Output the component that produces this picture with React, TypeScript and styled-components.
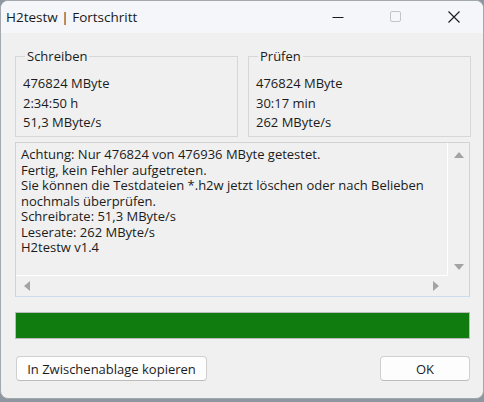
import React from 'react';
import styled, { createGlobalStyle } from 'styled-components';

const GlobalStyle = createGlobalStyle`
  html, body {
    margin: 0;
    padding: 0;
    background: #8e979f;
  }
  body {
    font-family: "Open Sans", "Liberation Sans", sans-serif;
    color: #1b1b1b;
  }
`;

// 窗口外框
const Window = styled.div`
  width: 484px;
  height: 399px;
  box-sizing: border-box;
  border: 1px solid #a3a8ad;
  border-radius: 8px;
  background: #f0f0f0;
  overflow: hidden;
  display: flex;
  flex-direction: column;
`;

const TitleBar = styled.div`
  height: 32px;
  flex: none;
  display: flex;
  align-items: center;
  background: #f4f6f9;
`;

const Title = styled.div`
  flex: 1;
  padding-left: 5px;
  font-size: 13.5px;
  color: #1a1a1a;
  white-space: nowrap;
`;

const CaptionButton = styled.div<{ disabled?: boolean }>`
  width: 58px;
  height: 32px;
  display: flex;
  align-items: center;
  justify-content: center;
  color: ${({ disabled }) => (disabled ? '#c4c4c4' : '#1a1a1a')};
`;

const Body = styled.div`
  flex: 1;
  padding: 15px 13px 0 14px;
  display: flex;
  flex-direction: column;
`;

const Groups = styled.div`
  display: grid;
  grid-template-columns: 223px 223px;
  column-gap: 10px;
`;

const Group = styled.fieldset`
  margin: 0;
  padding: 10px 7px 3px 7px;
  border: 1px solid #d7d7d7;
  min-width: 0;
`;

const Legend = styled.legend`
  padding: 0 2px;
  margin-left: 2px;
  font-size: 13px;
  line-height: 16px;
`;

const Line = styled.div`
  font-size: 13px;
  line-height: 19.7px;
  white-space: nowrap;
`;

// 日志输出框
const LogBox = styled.div`
  margin-top: 5px;
  height: 155px;
  box-sizing: border-box;
  border: 1px solid #d2d2d2;
  border-bottom-color: #cddcec;
  background: #f0f0f0;
  display: grid;
  grid-template-columns: 1fr 21px;
  grid-template-rows: 1fr 20px;
`;

const LogText = styled.div`
  border-right: 1px solid #ffffff;
  border-bottom: 1px solid #ffffff;
  padding: 4px 5px;
  font-size: 13px;
  line-height: 15.5px;
  white-space: pre;
  overflow: hidden;
`;

const ScrollV = styled.div`
  display: flex;
  flex-direction: column;
  justify-content: space-between;
  align-items: center;
  padding: 9px 0 6px 0;
`;

const ScrollH = styled.div`
  display: flex;
  justify-content: space-between;
  align-items: center;
  padding: 0 9px 0 8px;
`;

const Arrow = styled.div<{ dir: 'up' | 'down' | 'left' | 'right' }>`
  width: 0;
  height: 0;
  ${({ dir }) => {
    switch (dir) {
      case 'up':
        return 'border-left: 5px solid transparent; border-right: 5px solid transparent; border-bottom: 6px solid #a3a3a3;';
      case 'down':
        return 'border-left: 5px solid transparent; border-right: 5px solid transparent; border-top: 6px solid #a3a3a3;';
      case 'left':
        return 'border-top: 5px solid transparent; border-bottom: 5px solid transparent; border-right: 6px solid #a3a3a3;';
      default:
        return 'border-top: 5px solid transparent; border-bottom: 5px solid transparent; border-left: 6px solid #a3a3a3;';
    }
  }}
`;

const Progress = styled.div`
  margin-top: 15px;
  height: 27px;
  box-sizing: border-box;
  border: 1px solid #bcbcbc;
  background: #e6e6e6;
`;

const ProgressFill = styled.div`
  height: 100%;
  background: #107c10;
`;

const Buttons = styled.div`
  margin-top: 17px;
  display: flex;
  justify-content: space-between;
  padding-left: 1px;
`;

const Button = styled.button<{ wide?: boolean }>`
  height: 25px;
  width: ${({ wide }) => (wide ? '191px' : '90px')};
  box-sizing: border-box;
  border: 1px solid #d0d0d0;
  border-bottom-color: #bcbcbc;
  border-radius: 4px;
  background: #fdfdfd;
  font-family: "Open Sans", "Liberation Sans", sans-serif;
  font-size: 13px;
  color: #1b1b1b;
  padding: 0;
`;

const logLines = [
  'Achtung: Nur 476824 von 476936 MByte getestet.',
  'Fertig, kein Fehler aufgetreten.',
  'Sie können die Testdateien *.h2w jetzt löschen oder nach Belieben',
  'nochmals überprüfen.',
  'Schreibrate: 51,3 MByte/s',
  'Leserate: 262 MByte/s',
  'H2testw v1.4',
];

export default function App() {
  const progress = 100;
  return (
    <>
      <GlobalStyle />
      <Window>
        <TitleBar>
          <Title>H2testw | Fortschritt</Title>
          <CaptionButton>
            <svg width="12" height="12" viewBox="0 0 12 12">
              <path d="M0.5 6.5h11" stroke="currentColor" strokeWidth="1" />
            </svg>
          </CaptionButton>
          <CaptionButton disabled>
            <svg width="12" height="12" viewBox="0 0 12 12">
              <rect x="0.5" y="0.5" width="10" height="10" rx="1.5" fill="none" stroke="currentColor" strokeWidth="1" />
            </svg>
          </CaptionButton>
          <CaptionButton>
            <svg width="12" height="12" viewBox="0 0 12 12">
              <path d="M0.5 0.5l11 11M11.5 0.5l-11 11" stroke="currentColor" strokeWidth="1.1" />
            </svg>
          </CaptionButton>
        </TitleBar>
        <Body>
          <Groups>
            <Group>
              <Legend>Schreiben</Legend>
              <Line>476824 MByte</Line>
              <Line>2:34:50 h</Line>
              <Line>51,3 MByte/s</Line>
            </Group>
            <Group>
              <Legend>Prüfen</Legend>
              <Line>476824 MByte</Line>
              <Line>30:17 min</Line>
              <Line>262 MByte/s</Line>
            </Group>
          </Groups>
          <LogBox>
            <LogText>{logLines.join('\n')}</LogText>
            <ScrollV>
              <Arrow dir="up" />
              <Arrow dir="down" />
            </ScrollV>
            <ScrollH>
              <Arrow dir="left" />
              <Arrow dir="right" />
            </ScrollH>
            <div />
          </LogBox>
          <Progress>
            <ProgressFill style={{ width: `${progress}%` }} />
          </Progress>
          <Buttons>
            <Button wide>In Zwischenablage kopieren</Button>
            <Button>OK</Button>
          </Buttons>
        </Body>
      </Window>
    </>
  );
}
